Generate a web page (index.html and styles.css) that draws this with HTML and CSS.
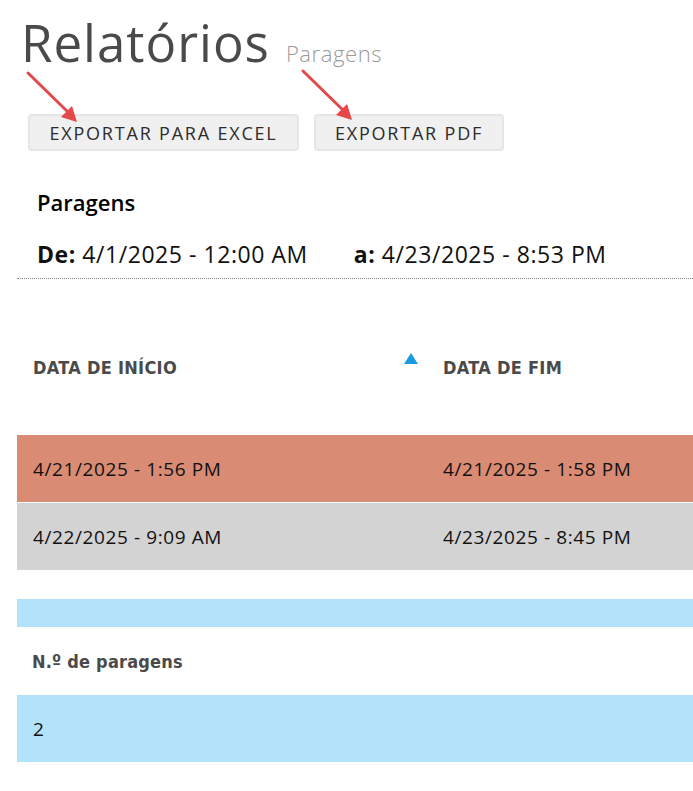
FILE: index.html
```html
<!DOCTYPE html>
<html lang="pt">
<head>
<meta charset="utf-8">
<title>Relatórios</title>
<link rel="stylesheet" href="styles.css">
</head>
<body>
<div class="page">
  <header class="title-bar">
    <h1 class="title">Relatórios</h1>
    <span class="subtitle">Paragens</span>
  </header>
  <div class="actions">
    <button class="btn btn-excel">EXPORTAR PARA EXCEL</button>
    <button class="btn btn-pdf">EXPORTAR PDF</button>
    <svg class="arrow arrow-1" width="60" height="60" viewBox="0 0 60 60">
      <line x1="3" y1="3" x2="46" y2="45" stroke="#e5484a" stroke-width="3" stroke-linecap="round"/>
      <polygon points="52,52 36,47 47,36" fill="#e5484a"/>
    </svg>
    <svg class="arrow arrow-2" width="60" height="60" viewBox="0 0 60 60">
      <line x1="3" y1="3" x2="46" y2="45" stroke="#e5484a" stroke-width="3" stroke-linecap="round"/>
      <polygon points="52,52 36,47 47,36" fill="#e5484a"/>
    </svg>
  </div>
  <section class="summary">
    <h2 class="summary-title">Paragens</h2>
    <div class="range">
      <span><b>De:</b> 4/1/2025 - 12:00 AM</span>
      <span><b>a:</b> 4/23/2025 - 8:53 PM</span>
    </div>
  </section>
  <div class="table">
    <div class="row head">
      <div class="cell th sorted">DATA DE INÍCIO<span class="sort"></span></div>
      <div class="cell th">DATA DE FIM</div>
    </div>
    <div class="row data salmon">
      <div class="cell">4/21/2025 - 1:56 PM</div>
      <div class="cell">4/21/2025 - 1:58 PM</div>
    </div>
    <div class="row data gray">
      <div class="cell">4/22/2025 - 9:09 AM</div>
      <div class="cell">4/23/2025 - 8:45 PM</div>
    </div>
  </div>
  <div class="totals">
    <div class="bar"></div>
    <div class="total-head">N.º de paragens</div>
    <div class="total-row">2</div>
  </div>
</div>
</body>
</html>
```

FILE: styles.css
```css
* { box-sizing: border-box; }
html, body { margin: 0; padding: 0; background: #fff; }
body {
  font-family: "Open Sans", "Noto Sans", sans-serif;
  color: #111;
  width: 693px;
  overflow: hidden;
}
.page { padding: 0 0 0 17px; }

.title-bar {
  display: flex;
  align-items: baseline;
  gap: 16px;
  padding: 12px 0 0 4px;
  height: 76px;
}
.title {
  margin: 0;
  font-weight: 400;
  font-size: 51px;
  line-height: 60px;
  letter-spacing: 1px;
  color: #4a4a4a;
}
.subtitle {
  font-size: 22px;
  letter-spacing: 0.6px;
  color: #9a9a9a;
  font-weight: 300;
}

.actions {
  position: relative;
  display: flex;
  gap: 15px;
  padding: 38px 0 0 11px;
  height: 75px;
}
.btn {
  height: 37px;
  background: #f0f0f0;
  border: 2px solid #e6e6e6;
  border-radius: 4px;
  font-family: "Open Sans", sans-serif;
  font-size: 18px;
  letter-spacing: 1.8px;
  color: #2c2c2c;
  padding: 0;
}
.btn-excel { width: 271px; }
.btn-pdf { width: 190px; }
.arrow { position: absolute; }
.arrow-1 { left: 8px; top: -6px; }
.arrow-2 { left: 283px; top: -8px; }

.summary { padding: 0 0 0 20px; }
.summary-title {
  margin: 0;
  padding-top: 37px;
  font-size: 22px;
  font-weight: 600;
  line-height: 28px;
  color: #000;
}
.range {
  display: flex;
  gap: 46px;
  padding-top: 23px;
  font-size: 23px;
  letter-spacing: 0.55px;
  line-height: 30px;
  color: #111;
  height: 62px;
}
.range b { font-weight: 700; }

.table {
  border-top: 1px dotted #888;
  width: 676px;
}
.row { display: grid; grid-template-columns: 410px 1fr; }
.head { height: 156px; align-items: center; }
.th {
  font-family: "DejaVu Sans Condensed", "Open Sans", sans-serif;
  font-weight: 700;
  font-size: 18px;
  letter-spacing: 0.3px;
  color: #4a4a4a;
  padding: 20px 0 0 15px;
}
.sorted { position: relative; }
.sort {
  position: absolute;
  right: 9px;
  top: 16px;
  width: 0; height: 0;
  border-left: 7px solid transparent;
  border-right: 7px solid transparent;
  border-bottom: 11px solid #1a9be0;
}
.data { height: 67px; align-items: center; font-size: 19px; letter-spacing: 0.6px; }
.cell { padding-left: 16px; }
.salmon { background: #d98b74; border-bottom: 1px solid #fff; height: 68px; }
.gray { background: #d3d3d3; }

.totals { width: 676px; padding-top: 29px; }
.bar { height: 28px; background: #b3e3fa; }
.total-head {
  height: 68px;
  display: flex;
  align-items: center;
  padding-left: 15px;
  font-family: "DejaVu Sans Condensed", "Open Sans", sans-serif;
  font-weight: 700;
  font-size: 18px;
  letter-spacing: 0.2px;
  color: #4a4a4a;
}
.total-row {
  height: 67px;
  display: flex;
  align-items: center;
  padding-left: 16px;
  background: #b3e3fa;
  font-size: 19px;
  color: #111;
}
```
